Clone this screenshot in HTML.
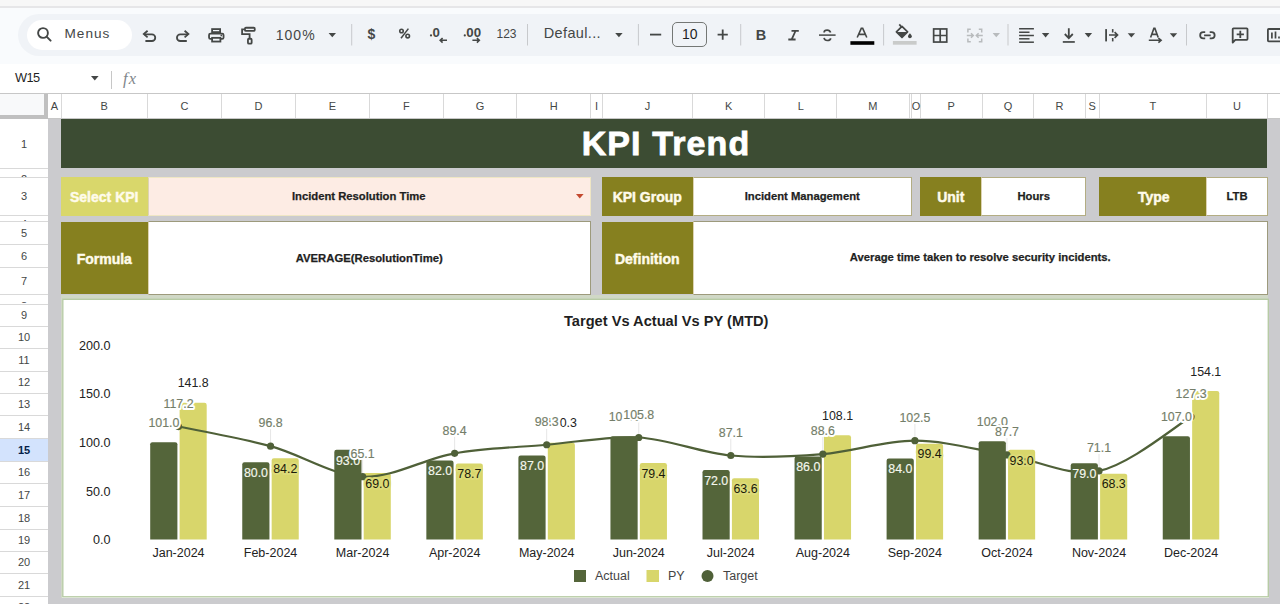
<!DOCTYPE html>
<html><head><meta charset="utf-8"><title>KPI Trend</title>
<style>
*{margin:0;padding:0;box-sizing:border-box}
html,body{width:1280px;height:604px;overflow:hidden;background:#f9fbfd;font-family:"Liberation Sans",sans-serif}
.a{position:absolute}
.t{position:absolute;white-space:nowrap;line-height:1}
</style></head><body>

<div class="a" style="left:0;top:0;width:1280px;height:6px;background:#f7f7f7"></div>
<div class="a" style="left:0;top:6px;width:1280px;height:1.5px;background:#e6e6e8"></div>
<div class="a" style="left:18px;top:14px;width:1300px;height:41.5px;background:#f0f3f7;border-radius:21px"></div>
<div class="a" style="left:27px;top:19.7px;width:105px;height:30px;background:#fff;border-radius:15px"></div>
<svg class="a" style="left:36px;top:26px" width="18" height="18" viewBox="0 0 18 18"><circle cx="7" cy="7" r="4.9" fill="none" stroke="#444746" stroke-width="1.9"/><path d="M10.6 10.6 L14.6 14.6" stroke="#444746" stroke-width="2" stroke-linecap="round"/></svg>
<div class="t" style="left:64.5px;top:27.3px;font-size:13.6px;color:#444746;letter-spacing:1px">Menus</div>
<svg class="a" style="left:0;top:0" width="1280" height="64" viewBox="0 0 1280 64">
<path d="M147.6 30.8 L143.8 34.1 L147.6 37.4" fill="none" stroke="#444746" stroke-width="1.8" stroke-linejoin="miter"/>
<path d="M144.3 34.3 H151.9 A3.35 3.35 0 0 1 151.9 41 H145.4" fill="none" stroke="#444746" stroke-width="1.8"/>
<path d="M184.6 30.8 L188.4 34.1 L184.6 37.4" fill="none" stroke="#444746" stroke-width="1.8"/>
<path d="M187.9 34.3 H180.3 A3.35 3.35 0 0 0 180.3 41 H186.8" fill="none" stroke="#444746" stroke-width="1.8"/>
<rect x="212.1" y="29.1" width="8" height="3" fill="none" stroke="#444746" stroke-width="1.8"/>
<rect x="209.05" y="33.65" width="14.5" height="5.3" rx="1.4" fill="none" stroke="#444746" stroke-width="1.8"/>
<rect x="212.1" y="37.85" width="8.3" height="3.7" fill="#f0f3f7" stroke="#444746" stroke-width="1.8"/>
<circle cx="221.3" cy="35.4" r="0.85" fill="#444746"/>
<rect x="244.95" y="27.75" width="9.8" height="3.2" rx="1" fill="none" stroke="#444746" stroke-width="1.8"/>
<path d="M244.9 29.4 H242.1 V34.1 H249.6 V38.2" fill="none" stroke="#444746" stroke-width="1.8"/>
<rect x="247.95" y="38.75" width="3.7" height="4.9" rx="1" fill="none" stroke="#444746" stroke-width="1.8"/>
<path d="M328.6 33 H336.0 L332.3 37.3 Z" fill="#444746"/>
<rect x="351.2" y="24" width="1" height="21.5" fill="#c7c9cc"/>
<rect x="527.0" y="24" width="1" height="21.5" fill="#c7c9cc"/>
<rect x="637.9" y="24" width="1" height="21.5" fill="#c7c9cc"/>
<rect x="740.2" y="24" width="1" height="21.5" fill="#c7c9cc"/>
<rect x="883.1" y="24" width="1" height="21.5" fill="#c7c9cc"/>
<rect x="1007.5" y="24" width="1" height="21.5" fill="#c7c9cc"/>
<rect x="1186.0" y="24" width="1" height="21.5" fill="#c7c9cc"/>
<circle cx="401.5" cy="31" r="1.75" fill="none" stroke="#444746" stroke-width="1.6"/>
<circle cx="407.7" cy="36.1" r="1.8" fill="none" stroke="#444746" stroke-width="1.6"/>
<path d="M401 38.3 L408.4 28.6" fill="none" stroke="#444746" stroke-width="1.5"/>
<path d="M447 40.3 H440.3 M442.6 38 L440.2 40.3 L442.6 42.6" fill="none" stroke="#444746" stroke-width="1.6"/>
<path d="M472.4 40.3 H479.2 M476.9 38 L479.3 40.3 L476.9 42.6" fill="none" stroke="#444746" stroke-width="1.6"/>
<circle cx="431" cy="35.4" r="1.1" fill="#444746"/>
<circle cx="464.8" cy="35.4" r="1.1" fill="#444746"/>
<path d="M615.2 33 H622.6 L618.9000000000001 37.3 Z" fill="#444746"/>
<rect x="650" y="33.7" width="11.2" height="1.8" fill="#444746"/>
<path d="M722.7 29.6 V39.8 M717.6 34.7 H727.8" fill="none" stroke="#444746" stroke-width="1.8"/>
<path d="M791.5 30.9 H798.8 M788.3 39.5 H795.6 M795.5 31 L791.7 39.4" fill="none" stroke="#444746" stroke-width="1.8"/>
<path d="M819 35.1 H835.6" stroke="#444746" stroke-width="1.5"/>
<path d="M830.6 32.6 C830 30.7 828.8 30.1 827.2 30.1 C825.4 30.1 824.1 31 824.1 32.4 M824 37.9 C824.5 39.8 825.9 40.5 827.3 40.5 C829.2 40.5 830.6 39.6 830.6 38.2" fill="none" stroke="#444746" stroke-width="1.7"/>
<path d="M857.2 37.5 L861.3 28.3 H862.7 L866.8 37.5 M858.8 34.4 H865.2" fill="none" stroke="#444746" stroke-width="1.6"/>
<rect x="850.4" y="41.2" width="23.9" height="3.6" fill="#000"/>
<path d="M899.3 24.4 L901.6 27.2" stroke="#444746" stroke-width="1.7"/>
<path d="M902 26.4 L907.6 31.95 L902 37.5 L896.4 31.95 Z" fill="none" stroke="#444746" stroke-width="1.7" stroke-linejoin="round"/>
<path d="M896.6 31.9 H907.4 L902 37.3 Z" fill="#444746"/>
<path d="M909.9 33.2 C911.2 34.7 911.8 35.5 911.8 36.3 A1.9 1.9 0 0 1 908 36.3 C908 35.5 908.6 34.7 909.9 33.2 Z" fill="#444746"/>
<rect x="892.9" y="41" width="23.7" height="3.7" fill="#c9cbca"/>
<rect x="933.65" y="28.95" width="13.1" height="13.1" fill="none" stroke="#444746" stroke-width="1.7"/>
<path d="M940.2 29 V42 M933.7 35.5 H946.7" fill="none" stroke="#444746" stroke-width="1.7"/>
<path d="M970.8 29.2 H967.9 V32.6 M967.9 38.4 V41.8 H970.8 M978.8 29.2 H981.7 V32.6 M981.7 38.4 V41.8 H978.8" fill="none" stroke="#b8bbbd" stroke-width="1.5"/>
<path d="M966.8 35.5 H973.2 M971 33.3 L973.3 35.5 L971 37.7 M982.8 35.5 H976.4 M978.6 33.3 L976.3 35.5 L978.6 37.7" fill="none" stroke="#b8bbbd" stroke-width="1.5"/>
<path d="M992.6 33 H1000.0 L996.3000000000001 37.3 Z" fill="#b8bbbd"/>
<rect x="1019.1" y="28.0" width="14.8" height="1.5" fill="#444746"/>
<rect x="1019.1" y="31.5" width="10.4" height="1.5" fill="#444746"/>
<rect x="1019.1" y="34.75" width="14.8" height="1.5" fill="#444746"/>
<rect x="1019.1" y="38.05" width="10.4" height="1.5" fill="#444746"/>
<rect x="1019.1" y="41.45" width="14.8" height="1.5" fill="#444746"/>
<path d="M1041.9 33.1 H1049.3000000000002 L1045.6000000000001 37.4 Z" fill="#444746"/>
<path d="M1068.8 28.2 V38 M1064.8 34 L1068.8 38.1 L1072.8 34" fill="none" stroke="#444746" stroke-width="1.8"/>
<rect x="1062.8" y="41.1" width="12" height="1.7" fill="#444746"/>
<path d="M1084.7 33.1 H1092.1000000000001 L1088.4 37.4 Z" fill="#444746"/>
<rect x="1105.2" y="29.1" width="1.8" height="12.3" fill="#444746"/>
<rect x="1111.9" y="29.1" width="1.6" height="3.4" fill="#444746"/>
<rect x="1111.9" y="38" width="1.6" height="3.4" fill="#444746"/>
<path d="M1109 35 H1117 M1114.6 32.2 L1117.5 35 L1114.6 37.8" fill="none" stroke="#444746" stroke-width="1.7"/>
<path d="M1127.7 33.3 H1135.1000000000001 L1131.4 37.599999999999994 Z" fill="#444746"/>
<path d="M1150.6 37.6 L1153.9 28.4 H1154.9 L1158.2 37.6 M1151.9 34.4 H1156.9" fill="none" stroke="#444746" stroke-width="1.6"/>
<path d="M1148.8 40.3 H1160.8 M1158.4 38 L1161.1 40.3 L1158.4 42.6" fill="none" stroke="#444746" stroke-width="1.6"/>
<path d="M1169.8 33.3 H1177.2 L1173.5 37.599999999999994 Z" fill="#444746"/>
<path d="M1205.2 32.15 H1203.3 A3.15 3.15 0 0 0 1203.3 38.45 H1205.2 M1209.7 32.15 H1211.5 A3.15 3.15 0 0 1 1211.5 38.45 H1209.7 M1204.1 35.3 H1210.7" fill="none" stroke="#444746" stroke-width="1.8"/>
<path d="M1232.7 42.6 V29.1 Q1232.7 28.3 1233.5 28.3 H1246.7 Q1247.5 28.3 1247.5 29.1 V39 Q1247.5 39.8 1246.7 39.8 H1235.3 Z" fill="none" stroke="#444746" stroke-width="1.8" stroke-linejoin="round"/>
<path d="M1240.3 30.8 V38 M1236.7 34.4 H1243.9" fill="none" stroke="#444746" stroke-width="1.8"/>
<rect x="1267.9" y="29" width="14" height="12.3" rx="0.8" fill="none" stroke="#444746" stroke-width="1.8"/>
<path d="M1271.9 32.5 V38.5 M1275.5 31.5 V38.5 M1279 36.5 V38.5" fill="none" stroke="#444746" stroke-width="1.7"/>
</svg>
<div class="t" style="left:367.5px;top:26.8px;font-size:14px;color:#444746;font-weight:bold">$</div>
<div class="t" style="left:432.5px;top:25.7px;font-size:13.3px;color:#444746;font-weight:bold">0</div>
<div class="t" style="left:466.3px;top:25.7px;font-size:13.3px;color:#444746;font-weight:bold">00</div>
<div class="t" style="left:496.5px;top:27.8px;font-size:12px;color:#444746">123</div>
<div class="t" style="left:275.8px;top:27.8px;font-size:14px;color:#444746;letter-spacing:1px">100%</div>
<div class="t" style="left:543.8px;top:26.3px;font-size:14.5px;color:#444746;letter-spacing:0.35px">Defaul...</div>
<div class="a" style="left:672px;top:22.2px;width:35px;height:25.3px;border:1px solid #747775;border-radius:5px"></div>
<div class="t" style="left:682px;top:26.9px;font-size:14px;color:#1f1f1f">10</div>
<div class="t" style="left:755.8px;top:27.8px;font-size:14.5px;color:#444746;font-weight:bold">B</div>
<div class="a" style="left:0;top:64px;width:1280px;height:29.5px;background:#fff"></div>
<div class="a" style="left:0;top:93px;width:1280px;height:1px;background:#c7c7c7"></div>
<div class="t" style="left:15px;top:71.6px;font-size:12.8px;color:#1f1f1f;letter-spacing:-0.6px">W15</div>
<svg class="a" style="left:90.5px;top:76.3px" width="8" height="5" viewBox="0 0 8 5"><path d="M0 0 H7.6 L3.8 4.4Z" fill="#444746"/></svg>
<div class="a" style="left:111px;top:71px;width:1px;height:17.5px;background:#c7c7c7"></div>
<div class="t" style="left:123px;top:71px;font-size:16.5px;color:#80868b;font-family:'Liberation Serif',serif;font-style:italic;letter-spacing:1.2px">fx</div>
<div class="a" style="left:48px;top:119px;width:1232px;height:485px;background:#cbcbce"></div>
<div class="a" style="left:0;top:94px;width:1280px;height:25px;background:#fff"></div>
<div class="a" style="left:0;top:94px;width:44px;height:21px;background:#f8f9fa"></div>
<div class="a" style="left:44px;top:94px;width:4px;height:25px;background:#c0c0c0"></div>
<div class="a" style="left:0;top:115px;width:48px;height:4px;background:#c0c0c0"></div>
<div class="a" style="left:60.5px;top:94px;width:1px;height:25px;background:#d9d9d9"></div>
<div class="t" style="left:48px;top:100.9px;width:13px;text-align:center;font-size:11px;color:#444746">A</div>
<div class="a" style="left:147.0px;top:94px;width:1px;height:25px;background:#d9d9d9"></div>
<div class="t" style="left:61px;top:100.9px;width:86.5px;text-align:center;font-size:11px;color:#444746">B</div>
<div class="a" style="left:220.9px;top:94px;width:1px;height:25px;background:#d9d9d9"></div>
<div class="t" style="left:147.5px;top:100.9px;width:73.9px;text-align:center;font-size:11px;color:#444746">C</div>
<div class="a" style="left:295.1px;top:94px;width:1px;height:25px;background:#d9d9d9"></div>
<div class="t" style="left:221.4px;top:100.9px;width:74.20000000000002px;text-align:center;font-size:11px;color:#444746">D</div>
<div class="a" style="left:369.0px;top:94px;width:1px;height:25px;background:#d9d9d9"></div>
<div class="t" style="left:295.6px;top:100.9px;width:73.89999999999998px;text-align:center;font-size:11px;color:#444746">E</div>
<div class="a" style="left:442.7px;top:94px;width:1px;height:25px;background:#d9d9d9"></div>
<div class="t" style="left:369.5px;top:100.9px;width:73.69999999999999px;text-align:center;font-size:11px;color:#444746">F</div>
<div class="a" style="left:516.3px;top:94px;width:1px;height:25px;background:#d9d9d9"></div>
<div class="t" style="left:443.2px;top:100.9px;width:73.59999999999997px;text-align:center;font-size:11px;color:#444746">G</div>
<div class="a" style="left:590.3px;top:94px;width:1px;height:25px;background:#d9d9d9"></div>
<div class="t" style="left:516.8px;top:100.9px;width:74.0px;text-align:center;font-size:11px;color:#444746">H</div>
<div class="a" style="left:601.7px;top:94px;width:1px;height:25px;background:#d9d9d9"></div>
<div class="t" style="left:590.8px;top:100.9px;width:11.400000000000091px;text-align:center;font-size:11px;color:#444746">I</div>
<div class="a" style="left:692.2px;top:94px;width:1px;height:25px;background:#d9d9d9"></div>
<div class="t" style="left:602.2px;top:100.9px;width:90.5px;text-align:center;font-size:11px;color:#444746">J</div>
<div class="a" style="left:764.3px;top:94px;width:1px;height:25px;background:#d9d9d9"></div>
<div class="t" style="left:692.7px;top:100.9px;width:72.09999999999991px;text-align:center;font-size:11px;color:#444746">K</div>
<div class="a" style="left:836.1px;top:94px;width:1px;height:25px;background:#d9d9d9"></div>
<div class="t" style="left:764.8px;top:100.9px;width:71.80000000000007px;text-align:center;font-size:11px;color:#444746">L</div>
<div class="a" style="left:908.6px;top:94px;width:1px;height:25px;background:#d9d9d9"></div>
<div class="t" style="left:836.6px;top:100.9px;width:72.5px;text-align:center;font-size:11px;color:#444746">M</div>
<div class="a" style="left:919.8px;top:94px;width:1px;height:25px;background:#d9d9d9"></div>
<div class="t" style="left:911.6px;top:100.9px;width:8.699999999999932px;text-align:center;font-size:11px;color:#444746">O</div>
<div class="a" style="left:981.7px;top:94px;width:1px;height:25px;background:#d9d9d9"></div>
<div class="t" style="left:920.3px;top:100.9px;width:61.90000000000009px;text-align:center;font-size:11px;color:#444746">P</div>
<div class="a" style="left:1033.3px;top:94px;width:1px;height:25px;background:#d9d9d9"></div>
<div class="t" style="left:982.2px;top:100.9px;width:51.59999999999991px;text-align:center;font-size:11px;color:#444746">Q</div>
<div class="a" style="left:1084.5px;top:94px;width:1px;height:25px;background:#d9d9d9"></div>
<div class="t" style="left:1033.8px;top:100.9px;width:51.200000000000045px;text-align:center;font-size:11px;color:#444746">R</div>
<div class="a" style="left:1098.9px;top:94px;width:1px;height:25px;background:#d9d9d9"></div>
<div class="t" style="left:1085px;top:100.9px;width:14.400000000000091px;text-align:center;font-size:11px;color:#444746">S</div>
<div class="a" style="left:1206.0px;top:94px;width:1px;height:25px;background:#d9d9d9"></div>
<div class="t" style="left:1099.4px;top:100.9px;width:107.09999999999991px;text-align:center;font-size:11px;color:#444746">T</div>
<div class="a" style="left:1266.9px;top:94px;width:1px;height:25px;background:#d9d9d9"></div>
<div class="t" style="left:1206.5px;top:100.9px;width:60.90000000000009px;text-align:center;font-size:11px;color:#444746">U</div>
<div class="a" style="left:1339.5px;top:94px;width:1px;height:25px;background:#d9d9d9"></div>
<div class="t" style="left:1267.4px;top:100.9px;width:72.59999999999991px;text-align:center;font-size:11px;color:#444746">V</div>
<div class="a" style="left:911.1px;top:94px;width:1px;height:25px;background:#d9d9d9"></div>
<div class="a" style="left:48px;top:118.3px;width:1232px;height:1px;background:#c7c7c7"></div>
<div class="a" style="left:0;top:119px;width:48px;height:485px;background:#fff"></div>
<div class="a" style="left:0;top:168.0px;width:48px;height:1px;background:#d9d9d9"></div>
<div class="t" style="left:0;top:138.55px;width:48px;text-align:center;font-size:11px;color:#444746">1</div>
<div class="a" style="left:0;top:176.7px;width:48px;height:1px;background:#d9d9d9"></div>
<div class="a" style="left:0;top:168.5px;width:48px;height:8.199999999999989px;overflow:hidden"><div class="t" style="left:0;top:5.4999999999999885px;width:48px;text-align:center;font-size:11px;color:#444746">2</div></div>
<div class="a" style="left:0;top:214.9px;width:48px;height:1px;background:#d9d9d9"></div>
<div class="t" style="left:0;top:191.10000000000002px;width:48px;text-align:center;font-size:11px;color:#444746">3</div>
<div class="a" style="left:0;top:221.4px;width:48px;height:1px;background:#d9d9d9"></div>
<div class="a" style="left:0;top:215.4px;width:48px;height:6.0px;overflow:hidden"><div class="t" style="left:0;top:3.3px;width:48px;text-align:center;font-size:11px;color:#444746">4</div></div>
<div class="a" style="left:0;top:244.0px;width:48px;height:1px;background:#d9d9d9"></div>
<div class="t" style="left:0;top:228.0px;width:48px;text-align:center;font-size:11px;color:#444746">5</div>
<div class="a" style="left:0;top:266.7px;width:48px;height:1px;background:#d9d9d9"></div>
<div class="t" style="left:0;top:250.65px;width:48px;text-align:center;font-size:11px;color:#444746">6</div>
<div class="a" style="left:0;top:293.7px;width:48px;height:1px;background:#d9d9d9"></div>
<div class="t" style="left:0;top:275.5px;width:48px;text-align:center;font-size:11px;color:#444746">7</div>
<div class="a" style="left:0;top:303.5px;width:48px;height:1px;background:#d9d9d9"></div>
<div class="a" style="left:0;top:294.2px;width:48px;height:9.300000000000011px;overflow:hidden"><div class="t" style="left:0;top:6.600000000000011px;width:48px;text-align:center;font-size:11px;color:#444746">8</div></div>
<div class="a" style="left:0;top:325.7px;width:48px;height:1px;background:#d9d9d9"></div>
<div class="t" style="left:0;top:309.90000000000003px;width:48px;text-align:center;font-size:11px;color:#444746">9</div>
<div class="a" style="left:0;top:348.1px;width:48px;height:1px;background:#d9d9d9"></div>
<div class="t" style="left:0;top:332.2px;width:48px;text-align:center;font-size:11px;color:#444746">10</div>
<div class="a" style="left:0;top:370.5px;width:48px;height:1px;background:#d9d9d9"></div>
<div class="t" style="left:0;top:354.6px;width:48px;text-align:center;font-size:11px;color:#444746">11</div>
<div class="a" style="left:0;top:392.9px;width:48px;height:1px;background:#d9d9d9"></div>
<div class="t" style="left:0;top:377.0px;width:48px;text-align:center;font-size:11px;color:#444746">12</div>
<div class="a" style="left:0;top:415.3px;width:48px;height:1px;background:#d9d9d9"></div>
<div class="t" style="left:0;top:399.40000000000003px;width:48px;text-align:center;font-size:11px;color:#444746">13</div>
<div class="a" style="left:0;top:438.0px;width:48px;height:1px;background:#d9d9d9"></div>
<div class="t" style="left:0;top:421.95px;width:48px;text-align:center;font-size:11px;color:#444746">14</div>
<div class="a" style="left:0;top:438.5px;width:48px;height:22.69999999999999px;background:#d3e3fd"></div>
<div class="a" style="left:0;top:460.7px;width:48px;height:1px;background:#d9d9d9"></div>
<div class="t" style="left:0;top:445.35px;width:48px;text-align:center;font-size:11px;font-weight:bold;color:#041e49">15</div>
<div class="a" style="left:0;top:483.4px;width:48px;height:1px;background:#d9d9d9"></div>
<div class="t" style="left:0;top:467.34999999999997px;width:48px;text-align:center;font-size:11px;color:#444746">16</div>
<div class="a" style="left:0;top:506.1px;width:48px;height:1px;background:#d9d9d9"></div>
<div class="t" style="left:0;top:490.05px;width:48px;text-align:center;font-size:11px;color:#444746">17</div>
<div class="a" style="left:0;top:528.5px;width:48px;height:1px;background:#d9d9d9"></div>
<div class="t" style="left:0;top:512.5999999999999px;width:48px;text-align:center;font-size:11px;color:#444746">18</div>
<div class="a" style="left:0;top:550.9px;width:48px;height:1px;background:#d9d9d9"></div>
<div class="t" style="left:0;top:535.0px;width:48px;text-align:center;font-size:11px;color:#444746">19</div>
<div class="a" style="left:0;top:573.3px;width:48px;height:1px;background:#d9d9d9"></div>
<div class="t" style="left:0;top:557.3999999999999px;width:48px;text-align:center;font-size:11px;color:#444746">20</div>
<div class="a" style="left:0;top:595.5px;width:48px;height:1px;background:#d9d9d9"></div>
<div class="t" style="left:0;top:579.6999999999999px;width:48px;text-align:center;font-size:11px;color:#444746">21</div>
<div class="a" style="left:0;top:617.5px;width:48px;height:1px;background:#d9d9d9"></div>
<div class="t" style="left:0;top:601.8px;width:48px;text-align:center;font-size:11px;color:#444746">22</div>
<div class="a" style="left:61px;top:119.2px;width:1206.4px;height:48.8px;background:#3c4c33"></div>
<div class="t" style="left:63px;top:126.4px;width:1206px;text-align:center;font-size:34px;font-weight:bold;color:#fff;letter-spacing:1.1px;-webkit-text-stroke:0.8px #fff">KPI Trend</div>
<div class="a" style="left:61px;top:177px;width:86.5px;height:38.5px;background:#d9d76b;"></div>
<div class="t" style="left:61px;top:189.94px;width:86.5px;text-align:center;font-size:14px;font-weight:bold;color:#fffbea;letter-spacing:0px;-webkit-text-stroke:0.45px #fffbea">Select KPI</div>
<div class="a" style="left:147.5px;top:177px;width:443.0px;height:38.5px;background:#fdece4;border:1px solid #efe6c4;border-left-color:#ddd3b3;"></div>
<div class="t" style="left:147.5px;top:190.62px;width:422.5px;text-align:center;font-size:11.25px;font-weight:bold;color:#1f1f1f;letter-spacing:0px;-webkit-text-stroke:0.25px #1f1f1f">Incident Resolution Time</div>
<svg class="a" style="left:576px;top:194px" width="8" height="5" viewBox="0 0 8 5"><path d="M0 0 H7.6 L3.8 4.6Z" fill="#c4492f"/></svg>
<div class="a" style="left:61px;top:221.8px;width:86.5px;height:71.89999999999998px;background:#86801f;"></div>
<div class="t" style="left:61px;top:251.94px;width:86.5px;text-align:center;font-size:14px;font-weight:bold;color:#fffbea;letter-spacing:0px;-webkit-text-stroke:0.45px #fffbea">Formula</div>
<div class="a" style="left:147.5px;top:221.4px;width:443.70000000000005px;height:73.20000000000002px;background:#fff;border:1px solid #9d9a7c;border-left-color:#ddd3b3;"></div>
<div class="t" style="left:147.5px;top:253.01px;width:443.5px;text-align:center;font-size:11.3px;font-weight:bold;color:#1f1f1f;letter-spacing:0px;-webkit-text-stroke:0.25px #1f1f1f">AVERAGE(ResolutionTime)</div>
<div class="a" style="left:601.8px;top:177px;width:90.90000000000009px;height:38.5px;background:#86801f;"></div>
<div class="t" style="left:601.8px;top:190.14px;width:90.90000000000009px;text-align:center;font-size:14px;font-weight:bold;color:#fffbea;letter-spacing:0px;-webkit-text-stroke:0.45px #fffbea">KPI Group</div>
<div class="a" style="left:692.5px;top:177px;width:219.5px;height:38.599999999999994px;background:#fff;border:1px solid #b3ad83;border-left-color:#ddd3b3;"></div>
<div class="t" style="left:692.5px;top:190.62px;width:219.5px;text-align:center;font-size:11.25px;font-weight:bold;color:#1f1f1f;letter-spacing:0px;-webkit-text-stroke:0.25px #1f1f1f">Incident Management</div>
<div class="a" style="left:920px;top:177px;width:61.60000000000002px;height:38.5px;background:#86801f;"></div>
<div class="t" style="left:920px;top:189.94px;width:61.60000000000002px;text-align:center;font-size:14px;font-weight:bold;color:#fffbea;letter-spacing:0px;-webkit-text-stroke:0.45px #fffbea">Unit</div>
<div class="a" style="left:981.4px;top:177px;width:104.60000000000002px;height:38.599999999999994px;background:#fff;border:1px solid #b3ad83;border-left-color:#ddd3b3;"></div>
<div class="t" style="left:981.4px;top:190.82px;width:104.60000000000002px;text-align:center;font-size:11.25px;font-weight:bold;color:#1f1f1f;letter-spacing:0px;-webkit-text-stroke:0.25px #1f1f1f">Hours</div>
<div class="a" style="left:1099.3px;top:177px;width:107.10000000000014px;height:38.5px;background:#86801f;"></div>
<div class="t" style="left:1101px;top:190.14px;width:105.40000000000009px;text-align:center;font-size:14px;font-weight:bold;color:#fffbea;letter-spacing:0px;-webkit-text-stroke:0.45px #fffbea">Type</div>
<div class="a" style="left:1206.2px;top:177px;width:61.799999999999955px;height:38.599999999999994px;background:#fff;border:1px solid #b3ad83;border-left-color:#ddd3b3;"></div>
<div class="t" style="left:1206.2px;top:190.82px;width:61.799999999999955px;text-align:center;font-size:11.25px;font-weight:bold;color:#1f1f1f;letter-spacing:0px;-webkit-text-stroke:0.25px #1f1f1f">LTB</div>
<div class="a" style="left:601.8px;top:221.8px;width:90.90000000000009px;height:71.89999999999998px;background:#86801f;"></div>
<div class="t" style="left:601.8px;top:251.74px;width:90.90000000000009px;text-align:center;font-size:14px;font-weight:bold;color:#fffbea;letter-spacing:0px;-webkit-text-stroke:0.45px #fffbea">Definition</div>
<div class="a" style="left:692.5px;top:221.4px;width:575.5px;height:73.20000000000002px;background:#fff;border:1px solid #9d9a7c;border-left-color:#ddd3b3;"></div>
<div class="t" style="left:692.5px;top:251.82px;width:575.5px;text-align:center;font-size:11.25px;font-weight:bold;color:#1f1f1f;letter-spacing:0px;-webkit-text-stroke:0.25px #1f1f1f">Average time taken to resolve security incidents.</div>
<div class="a" style="left:61px;top:294.6px;width:1207px;height:303px;background:#d0d8c6"></div>
<div class="a" style="left:62px;top:299px;width:1207px;height:298.6px;background:#fff"></div>
<svg class="a" style="left:0;top:0" width="1280" height="604" viewBox="0 0 1280 604">
<rect x="62.8" y="299.3" width="1205.5" height="297.5" fill="none" stroke="#b7cba5" stroke-width="1.4"/>
<text x="564" y="326.4" font-size="15.4" font-weight="bold" fill="#1f1f1f" textLength="204.5" lengthAdjust="spacingAndGlyphs">Target Vs Actual Vs PY (MTD)</text>
<text x="110.4" y="349.60" text-anchor="end" font-size="12.6" fill="#222">200.0</text>
<text x="110.4" y="398.25" text-anchor="end" font-size="12.6" fill="#222">150.0</text>
<text x="110.4" y="446.90" text-anchor="end" font-size="12.6" fill="#222">100.0</text>
<text x="110.4" y="495.55" text-anchor="end" font-size="12.6" fill="#222">50.0</text>
<text x="110.4" y="544.20" text-anchor="end" font-size="12.6" fill="#222">0.0</text>
<path d="M179.60 539.40 V405.05 Q179.60 402.85 181.80 402.85 H204.50 Q206.70 402.85 206.70 405.05 V539.40 Z" fill="#d8d66b"/>
<text x="178.50" y="557.1" text-anchor="middle" font-size="12.5" fill="#222">Jan-2024</text>
<path d="M271.65 539.40 V460.52 Q271.65 458.32 273.85 458.32 H296.55 Q298.75 458.32 298.75 460.52 V539.40 Z" fill="#d8d66b"/>
<text x="270.55" y="557.1" text-anchor="middle" font-size="12.5" fill="#222">Feb-2024</text>
<path d="M363.70 539.40 V475.15 Q363.70 472.95 365.90 472.95 H388.60 Q390.80 472.95 390.80 475.15 V539.40 Z" fill="#d8d66b"/>
<text x="362.60" y="557.1" text-anchor="middle" font-size="12.5" fill="#222">Mar-2024</text>
<path d="M455.75 539.40 V465.81 Q455.75 463.61 457.95 463.61 H480.65 Q482.85 463.61 482.85 465.81 V539.40 Z" fill="#d8d66b"/>
<text x="454.65" y="557.1" text-anchor="middle" font-size="12.5" fill="#222">Apr-2024</text>
<path d="M547.80 539.40 V445.01 Q547.80 442.81 550.00 442.81 H572.70 Q574.90 442.81 574.90 445.01 V539.40 Z" fill="#d8d66b"/>
<text x="546.70" y="557.1" text-anchor="middle" font-size="12.5" fill="#222">May-2024</text>
<path d="M639.85 539.40 V465.14 Q639.85 462.94 642.05 462.94 H664.75 Q666.95 462.94 666.95 465.14 V539.40 Z" fill="#d8d66b"/>
<text x="638.75" y="557.1" text-anchor="middle" font-size="12.5" fill="#222">Jun-2024</text>
<path d="M731.90 539.40 V480.35 Q731.90 478.15 734.10 478.15 H756.80 Q759.00 478.15 759.00 480.35 V539.40 Z" fill="#d8d66b"/>
<text x="730.80" y="557.1" text-anchor="middle" font-size="12.5" fill="#222">Jul-2024</text>
<path d="M823.95 539.40 V437.50 Q823.95 435.30 826.15 435.30 H848.85 Q851.05 435.30 851.05 437.50 V539.40 Z" fill="#d8d66b"/>
<text x="822.85" y="557.1" text-anchor="middle" font-size="12.5" fill="#222">Aug-2024</text>
<path d="M916.00 539.40 V445.88 Q916.00 443.68 918.20 443.68 H940.90 Q943.10 443.68 943.10 445.88 V539.40 Z" fill="#d8d66b"/>
<text x="914.90" y="557.1" text-anchor="middle" font-size="12.5" fill="#222">Sep-2024</text>
<path d="M1008.05 539.40 V452.04 Q1008.05 449.84 1010.25 449.84 H1032.95 Q1035.15 449.84 1035.15 452.04 V539.40 Z" fill="#d8d66b"/>
<text x="1006.95" y="557.1" text-anchor="middle" font-size="12.5" fill="#222">Oct-2024</text>
<path d="M1100.10 539.40 V475.83 Q1100.10 473.63 1102.30 473.63 H1125.00 Q1127.20 473.63 1127.20 475.83 V539.40 Z" fill="#d8d66b"/>
<text x="1099.00" y="557.1" text-anchor="middle" font-size="12.5" fill="#222">Nov-2024</text>
<path d="M1192.15 539.40 V393.20 Q1192.15 391.00 1194.35 391.00 H1217.05 Q1219.25 391.00 1219.25 393.20 V539.40 Z" fill="#d8d66b"/>
<text x="1191.05" y="557.1" text-anchor="middle" font-size="12.5" fill="#222">Dec-2024</text>
<line x1="270.55" y1="429.18" x2="270.55" y2="443.18" stroke="#e6e6e6" stroke-width="1"/>
<line x1="362.60" y1="459.71" x2="362.60" y2="473.71" stroke="#e6e6e6" stroke-width="1"/>
<line x1="454.65" y1="436.31" x2="454.65" y2="450.31" stroke="#e6e6e6" stroke-width="1"/>
<line x1="546.70" y1="427.74" x2="546.70" y2="441.74" stroke="#e6e6e6" stroke-width="1"/>
<line x1="638.75" y1="420.51" x2="638.75" y2="434.51" stroke="#e6e6e6" stroke-width="1"/>
<line x1="730.80" y1="438.52" x2="730.80" y2="452.52" stroke="#e6e6e6" stroke-width="1"/>
<line x1="822.85" y1="437.08" x2="822.85" y2="451.08" stroke="#e6e6e6" stroke-width="1"/>
<line x1="914.90" y1="423.69" x2="914.90" y2="437.69" stroke="#e6e6e6" stroke-width="1"/>
<line x1="1006.95" y1="437.94" x2="1006.95" y2="451.94" stroke="#e6e6e6" stroke-width="1"/>
<line x1="1099.00" y1="453.93" x2="1099.00" y2="467.93" stroke="#e6e6e6" stroke-width="1"/>
<path d="M178.50 426.54 C193.84 429.81 239.87 437.82 270.55 446.18 C301.23 454.54 331.92 475.52 362.60 476.71 C393.28 477.90 423.97 458.64 454.65 453.31 C485.33 447.98 516.02 447.37 546.70 444.74 C577.38 442.10 608.07 435.72 638.75 437.51 C669.43 439.31 700.12 452.76 730.80 455.52 C761.48 458.28 792.17 456.55 822.85 454.08 C853.53 451.61 884.22 440.55 914.90 440.69 C945.58 440.84 976.27 449.91 1006.95 454.94 C1037.63 459.98 1068.32 477.29 1099.00 470.93 C1129.68 464.57 1175.71 425.83 1191.05 416.81" fill="none" stroke="#4f6038" stroke-width="2.2"/>
<circle cx="178.50" cy="426.54" r="3.6" fill="#4f6038"/>
<circle cx="270.55" cy="446.18" r="3.6" fill="#4f6038"/>
<circle cx="362.60" cy="476.71" r="3.6" fill="#4f6038"/>
<circle cx="454.65" cy="453.31" r="3.6" fill="#4f6038"/>
<circle cx="546.70" cy="444.74" r="3.6" fill="#4f6038"/>
<circle cx="638.75" cy="437.51" r="3.6" fill="#4f6038"/>
<circle cx="730.80" cy="455.52" r="3.6" fill="#4f6038"/>
<circle cx="822.85" cy="454.08" r="3.6" fill="#4f6038"/>
<circle cx="914.90" cy="440.69" r="3.6" fill="#4f6038"/>
<circle cx="1006.95" cy="454.94" r="3.6" fill="#4f6038"/>
<circle cx="1099.00" cy="470.93" r="3.6" fill="#4f6038"/>
<circle cx="1191.05" cy="416.81" r="3.6" fill="#4f6038"/>
<path d="M150.20 539.40 V444.34 Q150.20 442.14 152.40 442.14 H175.20 Q177.40 442.14 177.40 444.34 V539.40 Z" fill="#54653a"/>
<path d="M242.25 539.40 V464.56 Q242.25 462.36 244.45 462.36 H267.25 Q269.45 462.36 269.45 464.56 V539.40 Z" fill="#54653a"/>
<path d="M334.30 539.40 V452.04 Q334.30 449.84 336.50 449.84 H359.30 Q361.50 449.84 361.50 452.04 V539.40 Z" fill="#54653a"/>
<path d="M426.35 539.40 V462.63 Q426.35 460.43 428.55 460.43 H451.35 Q453.55 460.43 453.55 462.63 V539.40 Z" fill="#54653a"/>
<path d="M518.40 539.40 V457.82 Q518.40 455.62 520.60 455.62 H543.40 Q545.60 455.62 545.60 457.82 V539.40 Z" fill="#54653a"/>
<path d="M610.45 539.40 V438.56 Q610.45 436.36 612.65 436.36 H635.45 Q637.65 436.36 637.65 438.56 V539.40 Z" fill="#54653a"/>
<path d="M702.50 539.40 V472.26 Q702.50 470.06 704.70 470.06 H727.50 Q729.70 470.06 729.70 472.26 V539.40 Z" fill="#54653a"/>
<path d="M794.55 539.40 V458.78 Q794.55 456.58 796.75 456.58 H819.55 Q821.75 456.58 821.75 458.78 V539.40 Z" fill="#54653a"/>
<path d="M886.60 539.40 V460.71 Q886.60 458.51 888.80 458.51 H911.60 Q913.80 458.51 913.80 460.71 V539.40 Z" fill="#54653a"/>
<path d="M978.65 539.40 V443.37 Q978.65 441.17 980.85 441.17 H1003.65 Q1005.85 441.17 1005.85 443.37 V539.40 Z" fill="#54653a"/>
<path d="M1070.70 539.40 V465.52 Q1070.70 463.32 1072.90 463.32 H1095.70 Q1097.90 463.32 1097.90 465.52 V539.40 Z" fill="#54653a"/>
<path d="M1162.75 539.40 V438.56 Q1162.75 436.36 1164.95 436.36 H1187.75 Q1189.95 436.36 1189.95 438.56 V539.40 Z" fill="#54653a"/>
<text x="163.90" y="426.84" text-anchor="middle" font-size="12.4" fill="#fff" stroke="#fff" stroke-width="4" stroke-linejoin="round">101.0</text>
<text x="163.90" y="426.84" text-anchor="middle" font-size="12.4" fill="#747e69" stroke="#747e69" stroke-width="0.15">101.0</text>
<text x="255.95" y="477.16" text-anchor="middle" font-size="12.4" fill="#f4f7ee" stroke="#f4f7ee" stroke-width="0.15">80.0</text>
<text x="348.00" y="464.64" text-anchor="middle" font-size="12.4" fill="#f4f7ee" stroke="#f4f7ee" stroke-width="0.15">93.0</text>
<text x="440.05" y="475.23" text-anchor="middle" font-size="12.4" fill="#f4f7ee" stroke="#f4f7ee" stroke-width="0.15">82.0</text>
<text x="532.10" y="470.42" text-anchor="middle" font-size="12.4" fill="#f4f7ee" stroke="#f4f7ee" stroke-width="0.15">87.0</text>
<text x="624.15" y="421.06" text-anchor="middle" font-size="12.4" fill="#fff" stroke="#fff" stroke-width="4" stroke-linejoin="round">107.0</text>
<text x="624.15" y="421.06" text-anchor="middle" font-size="12.4" fill="#747e69" stroke="#747e69" stroke-width="0.15">107.0</text>
<text x="716.20" y="484.86" text-anchor="middle" font-size="12.4" fill="#f4f7ee" stroke="#f4f7ee" stroke-width="0.15">72.0</text>
<text x="808.25" y="471.38" text-anchor="middle" font-size="12.4" fill="#f4f7ee" stroke="#f4f7ee" stroke-width="0.15">86.0</text>
<text x="900.30" y="473.31" text-anchor="middle" font-size="12.4" fill="#f4f7ee" stroke="#f4f7ee" stroke-width="0.15">84.0</text>
<text x="992.35" y="425.87" text-anchor="middle" font-size="12.4" fill="#fff" stroke="#fff" stroke-width="4" stroke-linejoin="round">102.0</text>
<text x="992.35" y="425.87" text-anchor="middle" font-size="12.4" fill="#747e69" stroke="#747e69" stroke-width="0.15">102.0</text>
<text x="1084.40" y="478.12" text-anchor="middle" font-size="12.4" fill="#f4f7ee" stroke="#f4f7ee" stroke-width="0.15">79.0</text>
<text x="1176.45" y="421.06" text-anchor="middle" font-size="12.4" fill="#fff" stroke="#fff" stroke-width="4" stroke-linejoin="round">107.0</text>
<text x="1176.45" y="421.06" text-anchor="middle" font-size="12.4" fill="#747e69" stroke="#747e69" stroke-width="0.15">107.0</text>
<text x="193.20" y="387.35" text-anchor="middle" font-size="12.4" fill="#fff" stroke="#fff" stroke-width="4" stroke-linejoin="round">141.8</text>
<text x="193.20" y="387.35" text-anchor="middle" font-size="12.4" fill="#222" stroke="#222" stroke-width="0">141.8</text>
<text x="285.25" y="473.12" text-anchor="middle" font-size="12.4" fill="#dcda78" stroke="#dcda78" stroke-width="4" stroke-linejoin="round">84.2</text>
<text x="285.25" y="473.12" text-anchor="middle" font-size="12.4" fill="#1a1a0a" stroke="#1a1a0a" stroke-width="0">84.2</text>
<text x="377.30" y="487.75" text-anchor="middle" font-size="12.4" fill="#dcda78" stroke="#dcda78" stroke-width="4" stroke-linejoin="round">69.0</text>
<text x="377.30" y="487.75" text-anchor="middle" font-size="12.4" fill="#1a1a0a" stroke="#1a1a0a" stroke-width="0">69.0</text>
<text x="469.35" y="478.41" text-anchor="middle" font-size="12.4" fill="#dcda78" stroke="#dcda78" stroke-width="4" stroke-linejoin="round">78.7</text>
<text x="469.35" y="478.41" text-anchor="middle" font-size="12.4" fill="#1a1a0a" stroke="#1a1a0a" stroke-width="0">78.7</text>
<text x="561.40" y="427.31" text-anchor="middle" font-size="12.4" fill="#fff" stroke="#fff" stroke-width="4" stroke-linejoin="round">100.3</text>
<text x="561.40" y="427.31" text-anchor="middle" font-size="12.4" fill="#222" stroke="#222" stroke-width="0">100.3</text>
<text x="653.45" y="477.74" text-anchor="middle" font-size="12.4" fill="#dcda78" stroke="#dcda78" stroke-width="4" stroke-linejoin="round">79.4</text>
<text x="653.45" y="477.74" text-anchor="middle" font-size="12.4" fill="#1a1a0a" stroke="#1a1a0a" stroke-width="0">79.4</text>
<text x="745.50" y="492.95" text-anchor="middle" font-size="12.4" fill="#dcda78" stroke="#dcda78" stroke-width="4" stroke-linejoin="round">63.6</text>
<text x="745.50" y="492.95" text-anchor="middle" font-size="12.4" fill="#1a1a0a" stroke="#1a1a0a" stroke-width="0">63.6</text>
<text x="837.55" y="419.80" text-anchor="middle" font-size="12.4" fill="#fff" stroke="#fff" stroke-width="4" stroke-linejoin="round">108.1</text>
<text x="837.55" y="419.80" text-anchor="middle" font-size="12.4" fill="#222" stroke="#222" stroke-width="0">108.1</text>
<text x="929.60" y="458.48" text-anchor="middle" font-size="12.4" fill="#dcda78" stroke="#dcda78" stroke-width="4" stroke-linejoin="round">99.4</text>
<text x="929.60" y="458.48" text-anchor="middle" font-size="12.4" fill="#1a1a0a" stroke="#1a1a0a" stroke-width="0">99.4</text>
<text x="1021.65" y="464.64" text-anchor="middle" font-size="12.4" fill="#dcda78" stroke="#dcda78" stroke-width="4" stroke-linejoin="round">93.0</text>
<text x="1021.65" y="464.64" text-anchor="middle" font-size="12.4" fill="#1a1a0a" stroke="#1a1a0a" stroke-width="0">93.0</text>
<text x="1113.70" y="488.43" text-anchor="middle" font-size="12.4" fill="#dcda78" stroke="#dcda78" stroke-width="4" stroke-linejoin="round">68.3</text>
<text x="1113.70" y="488.43" text-anchor="middle" font-size="12.4" fill="#1a1a0a" stroke="#1a1a0a" stroke-width="0">68.3</text>
<text x="1205.75" y="375.50" text-anchor="middle" font-size="12.4" fill="#fff" stroke="#fff" stroke-width="4" stroke-linejoin="round">154.1</text>
<text x="1205.75" y="375.50" text-anchor="middle" font-size="12.4" fill="#222" stroke="#222" stroke-width="0">154.1</text>
<text x="178.50" y="407.74" text-anchor="middle" font-size="12.4" fill="#fff" stroke="#fff" stroke-width="4" stroke-linejoin="round">117.2</text>
<text x="178.50" y="407.74" text-anchor="middle" font-size="12.4" fill="#747e69" stroke="#747e69" stroke-width="0.15">117.2</text>
<text x="270.55" y="427.38" text-anchor="middle" font-size="12.4" fill="#fff" stroke="#fff" stroke-width="4" stroke-linejoin="round">96.8</text>
<text x="270.55" y="427.38" text-anchor="middle" font-size="12.4" fill="#747e69" stroke="#747e69" stroke-width="0.15">96.8</text>
<text x="362.60" y="457.91" text-anchor="middle" font-size="12.4" fill="#fff" stroke="#fff" stroke-width="4" stroke-linejoin="round">65.1</text>
<text x="362.60" y="457.91" text-anchor="middle" font-size="12.4" fill="#747e69" stroke="#747e69" stroke-width="0.15">65.1</text>
<text x="454.65" y="434.51" text-anchor="middle" font-size="12.4" fill="#fff" stroke="#fff" stroke-width="4" stroke-linejoin="round">89.4</text>
<text x="454.65" y="434.51" text-anchor="middle" font-size="12.4" fill="#747e69" stroke="#747e69" stroke-width="0.15">89.4</text>
<text x="546.70" y="425.94" text-anchor="middle" font-size="12.4" fill="#fff" stroke="#fff" stroke-width="4" stroke-linejoin="round">98.3</text>
<text x="546.70" y="425.94" text-anchor="middle" font-size="12.4" fill="#747e69" stroke="#747e69" stroke-width="0.15">98.3</text>
<text x="638.75" y="418.71" text-anchor="middle" font-size="12.4" fill="#fff" stroke="#fff" stroke-width="4" stroke-linejoin="round">105.8</text>
<text x="638.75" y="418.71" text-anchor="middle" font-size="12.4" fill="#747e69" stroke="#747e69" stroke-width="0.15">105.8</text>
<text x="730.80" y="436.72" text-anchor="middle" font-size="12.4" fill="#fff" stroke="#fff" stroke-width="4" stroke-linejoin="round">87.1</text>
<text x="730.80" y="436.72" text-anchor="middle" font-size="12.4" fill="#747e69" stroke="#747e69" stroke-width="0.15">87.1</text>
<text x="822.85" y="435.28" text-anchor="middle" font-size="12.4" fill="#fff" stroke="#fff" stroke-width="4" stroke-linejoin="round">88.6</text>
<text x="822.85" y="435.28" text-anchor="middle" font-size="12.4" fill="#747e69" stroke="#747e69" stroke-width="0.15">88.6</text>
<text x="914.90" y="421.89" text-anchor="middle" font-size="12.4" fill="#fff" stroke="#fff" stroke-width="4" stroke-linejoin="round">102.5</text>
<text x="914.90" y="421.89" text-anchor="middle" font-size="12.4" fill="#747e69" stroke="#747e69" stroke-width="0.15">102.5</text>
<text x="1006.95" y="436.14" text-anchor="middle" font-size="12.4" fill="#fff" stroke="#fff" stroke-width="4" stroke-linejoin="round">87.7</text>
<text x="1006.95" y="436.14" text-anchor="middle" font-size="12.4" fill="#747e69" stroke="#747e69" stroke-width="0.15">87.7</text>
<text x="1099.00" y="452.13" text-anchor="middle" font-size="12.4" fill="#fff" stroke="#fff" stroke-width="4" stroke-linejoin="round">71.1</text>
<text x="1099.00" y="452.13" text-anchor="middle" font-size="12.4" fill="#747e69" stroke="#747e69" stroke-width="0.15">71.1</text>
<text x="1191.05" y="398.01" text-anchor="middle" font-size="12.4" fill="#fff" stroke="#fff" stroke-width="4" stroke-linejoin="round">127.3</text>
<text x="1191.05" y="398.01" text-anchor="middle" font-size="12.4" fill="#747e69" stroke="#747e69" stroke-width="0.15">127.3</text>
<rect x="574" y="570" width="12" height="12" fill="#54653a"/>
<text x="595" y="580" font-size="12.5" fill="#444">Actual</text>
<rect x="646.5" y="570" width="12.5" height="12" fill="#d8d66b"/>
<text x="668" y="580" font-size="12.5" fill="#444">PY</text>
<circle cx="707.5" cy="576" r="6" fill="#4f6038"/>
<text x="723" y="580" font-size="12.5" fill="#444">Target</text>
</svg>
</body></html>
